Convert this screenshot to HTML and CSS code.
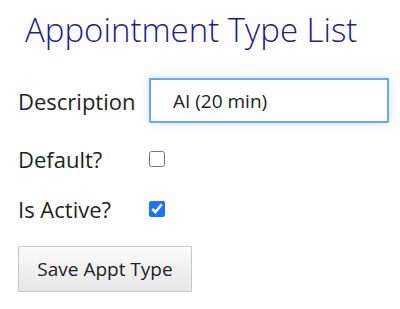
FILE: index.html
```html
<!DOCTYPE html>
<html lang="en">
<head>
    <meta charset="UTF-8">
    <meta name="viewport" content="width=device-width, initial-scale=1.0">
    <title>Appointment Type List</title>
    <link rel="stylesheet" href="styles.css">
</head>
<body>
    <h1 class="title">Appointment Type List</h1>
    <form class="appt-form">
        <div class="row">
            <label class="lbl" for="desc">Description</label>
            <input type="text" class="txt" id="desc" value="AI (20 min)" autocomplete="off">
        </div>
        <div class="row check-row">
            <label class="lbl" for="def">Default?</label>
            <input type="checkbox" class="chk" id="def">
        </div>
        <div class="row check-row">
            <label class="lbl" for="act">Is Active?</label>
            <input type="checkbox" class="chk" id="act" checked>
        </div>
        <button type="button" class="btn">Save Appt Type</button>
    </form>
</body>
</html>
```

FILE: styles.css
```css
html, body {
    margin: 0;
    padding: 0;
    background: #fff;
    font-family: "Open Sans", "Noto Sans", sans-serif;
    color: #1e1e1e;
}

body {
    padding: 0 18px;
}

.title {
    margin: 0;
    padding: 10px 0 0 7px;
    font-size: 33px;
    font-weight: 300;
    line-height: 40px;
    color: #1c1c8f;
}

.appt-form {
    margin-top: 28px;
}

.row {
    display: grid;
    grid-template-columns: 131px auto;
    align-items: center;
}

.lbl {
    font-size: 22px;
}

.txt {
    box-sizing: border-box;
    width: 240px;
    height: 45px;
    padding: 0 22px;
    border: 2px solid #6aaae6;
    border-radius: 1px;
    font-family: inherit;
    font-size: 19px;
    color: #222;
    outline: none;
    box-shadow: 0 0 10px rgba(102, 170, 233, 0.35);
}

.check-row {
    height: 50px;
    margin-top: 0;
}

.row + .check-row {
    margin-top: 11px;
}

.check-row + .check-row {
    margin-top: 0;
}

.chk {
    margin: 0;
    width: 16px;
    height: 16px;
    accent-color: #1a73f0;
}

.btn {
    margin-top: 12px;
    width: 174px;
    height: 46px;
    border: 1px solid #c8c8c8;
    border-radius: 1px;
    background: linear-gradient(#fbfbfb, #e6e6e6);
    font-family: inherit;
    font-size: 19px;
    color: #222;
}
```
